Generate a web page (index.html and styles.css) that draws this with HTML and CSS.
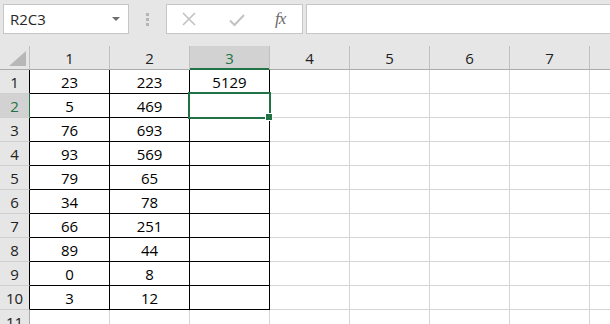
FILE: index.html
```html
<!DOCTYPE html>
<html lang="en">
<head>
    <meta charset="UTF-8">
    <title>Sheet1 - R2C3</title>
    <link rel="stylesheet" href="styles.css">
</head>
<body>
    <div class="toolbar">
        <div class="namebox">
            <span>R2C3</span>
            <svg class="caret" width="8" height="5" viewBox="0 0 8 5"><path d="M0 0h8L4 4z" fill="#6d6d6d"/></svg>
        </div>
        <div class="grip"><i></i><i></i><i></i></div>
        <div class="fbuttons">
            <svg width="14" height="14" viewBox="0 0 14 14"><path d="M1 1l12 12M13 1L1 13" stroke="#c2c2c2" stroke-width="1.6" fill="none"/></svg>
            <svg width="16" height="14" viewBox="0 0 16 14"><path d="M1 7.5l4.5 4.5L15 2" stroke="#c2c2c2" stroke-width="2" fill="none"/></svg>
            <span class="fx">fx</span>
        </div>
        <div class="formula"></div>
    </div>

    <div class="sheet">
        <div class="row head">
            <div class="rh corner"><svg width="17" height="15" viewBox="0 0 17 15"><path d="M17 0V15H0z" fill="#b7b7b7"/></svg></div>
            <div class="cell">1</div>
            <div class="cell">2</div>
            <div class="cell sel">3</div>
            <div class="cell">4</div>
            <div class="cell">5</div>
            <div class="cell">6</div>
            <div class="cell">7</div>
            <div class="cell"></div>
        </div>
        <div class="row">
            <div class="rh dark">1</div>
            <div class="cell b">23</div><div class="cell b">223</div><div class="cell b">5129</div>
            <div class="cell"></div><div class="cell"></div><div class="cell"></div><div class="cell"></div><div class="cell"></div>
        </div>
        <div class="row">
            <div class="rh sel">2</div>
            <div class="cell b">5</div><div class="cell b">469</div><div class="cell b"></div>
            <div class="cell"></div><div class="cell"></div><div class="cell"></div><div class="cell"></div><div class="cell"></div>
        </div>
        <div class="row">
            <div class="rh dark">3</div>
            <div class="cell b">76</div><div class="cell b">693</div><div class="cell b"></div>
            <div class="cell"></div><div class="cell"></div><div class="cell"></div><div class="cell"></div><div class="cell"></div>
        </div>
        <div class="row">
            <div class="rh dark">4</div>
            <div class="cell b">93</div><div class="cell b">569</div><div class="cell b"></div>
            <div class="cell"></div><div class="cell"></div><div class="cell"></div><div class="cell"></div><div class="cell"></div>
        </div>
        <div class="row">
            <div class="rh dark">5</div>
            <div class="cell b">79</div><div class="cell b">65</div><div class="cell b"></div>
            <div class="cell"></div><div class="cell"></div><div class="cell"></div><div class="cell"></div><div class="cell"></div>
        </div>
        <div class="row">
            <div class="rh dark">6</div>
            <div class="cell b">34</div><div class="cell b">78</div><div class="cell b"></div>
            <div class="cell"></div><div class="cell"></div><div class="cell"></div><div class="cell"></div><div class="cell"></div>
        </div>
        <div class="row">
            <div class="rh dark">7</div>
            <div class="cell b">66</div><div class="cell b">251</div><div class="cell b"></div>
            <div class="cell"></div><div class="cell"></div><div class="cell"></div><div class="cell"></div><div class="cell"></div>
        </div>
        <div class="row">
            <div class="rh dark">8</div>
            <div class="cell b">89</div><div class="cell b">44</div><div class="cell b"></div>
            <div class="cell"></div><div class="cell"></div><div class="cell"></div><div class="cell"></div><div class="cell"></div>
        </div>
        <div class="row">
            <div class="rh dark">9</div>
            <div class="cell b">0</div><div class="cell b">8</div><div class="cell b"></div>
            <div class="cell"></div><div class="cell"></div><div class="cell"></div><div class="cell"></div><div class="cell"></div>
        </div>
        <div class="row">
            <div class="rh dark">10</div>
            <div class="cell b">3</div><div class="cell b">12</div><div class="cell b"></div>
            <div class="cell"></div><div class="cell"></div><div class="cell"></div><div class="cell"></div><div class="cell"></div>
        </div>
        <div class="row">
            <div class="rh">11</div>
            <div class="cell"></div><div class="cell"></div><div class="cell"></div>
            <div class="cell"></div><div class="cell"></div><div class="cell"></div><div class="cell"></div><div class="cell"></div>
        </div>

        <!-- active cell C2 -->
        <div class="active"></div>
        <div class="handle"></div>
    </div>
</body>
</html>
```

FILE: styles.css
```css
* {
    margin: 0;
    padding: 0;
    box-sizing: border-box;
}

body {
    background-color: #e6e6e6;
    font-family: "Open Sans", "Noto Sans", sans-serif;
    width: 610px;
    height: 324px;
    overflow: hidden;
}

.toolbar {
    display: flex;
    align-items: flex-start;
    height: 46px;
    padding: 4px 0 0 3px;
}

.namebox {
    width: 126px;
    height: 30px;
    background-color: #fff;
    border: 1px solid #c6c6c6;
    display: flex;
    align-items: center;
    justify-content: space-between;
    padding: 0 8px 0 6px;
    font-size: 15px;
    color: #262626;
}

.caret {
    margin-top: 1px;
}

.grip {
    width: 37px;
    height: 30px;
    display: flex;
    flex-direction: column;
    align-items: center;
    justify-content: center;
    gap: 2px;
}

.grip i {
    display: block;
    width: 3px;
    height: 3px;
    background-color: #b5b5b5;
}

.fbuttons {
    width: 137px;
    height: 30px;
    background-color: #fff;
    border: 1px solid #c6c6c6;
    display: flex;
    align-items: center;
    padding-left: 15px;
}

.fbuttons svg:first-child {
    margin-right: 33px;
}

.fbuttons svg:nth-child(2) {
    margin-right: 30px;
    margin-top: 2px;
}

.fx {
    font-family: "Liberation Serif", "DejaVu Serif", serif;
    font-style: italic;
    font-size: 17px;
    color: #6a6a6a;
    letter-spacing: -1px;
    margin-top: -1px;
}

/* runs off the right edge, like the real bar */
.formula {
    flex: 1;
    height: 30px;
    margin-left: 3px;
    background-color: #fff;
    border: 1px solid #c6c6c6;
    border-right: none;
}

.sheet {
    position: relative;
    background-color: #fff;
}

.row {
    display: flex;
    height: 24px;
}

.cell,
.rh {
    flex: none;
    height: 24px;
    display: flex;
    align-items: center;
    justify-content: center;
    font-size: 15px;
    color: #000;
    border-right: 1px solid #d4d4d4;
    border-bottom: 1px solid #d4d4d4;
}

.cell {
    width: 80px;
}

/* only a sliver of column 8 is visible */
.cell:last-child {
    width: 20px;
    border-right: none;
}

.rh {
    width: 30px;
    background-color: #e6e6e6;
    color: #222;
    border-right-color: #ababab;
    border-bottom-color: #cfcfcf;
}

.rh.dark {
    border-right-color: #000;
}

.rh.sel {
    background-color: #d2d2d2;
    color: #217346;
    border-right-color: #217346;
}

.head .cell {
    background-color: #e6e6e6;
    color: #222;
    border-right-color: #c0c0c0;
    border-bottom-color: #ababab;
    padding-top: 1px;
}

.head .rh {
    border-bottom-color: #ababab;
    border-right-color: #c0c0c0;
}

.head .cell.sel {
    background-color: #d2d2d2;
    color: #217346;
    border-bottom-color: #217346;
    box-shadow: inset 0 -1px 0 #217346;
}

.corner {
    align-items: flex-end;
    justify-content: flex-end;
    padding: 0 3px 3px 0;
}

.corner svg {
    display: block;
}

.cell.b {
    border-right-color: #000;
    border-bottom-color: #000;
}

.active {
    position: absolute;
    left: 188px;
    top: 46px;
    width: 83px;
    height: 27px;
    border: 2px solid #217346;
}

.handle {
    position: absolute;
    left: 265px;
    top: 67px;
    width: 8px;
    height: 8px;
    background-color: #217346;
    border: 1px solid #fff;
}
```
